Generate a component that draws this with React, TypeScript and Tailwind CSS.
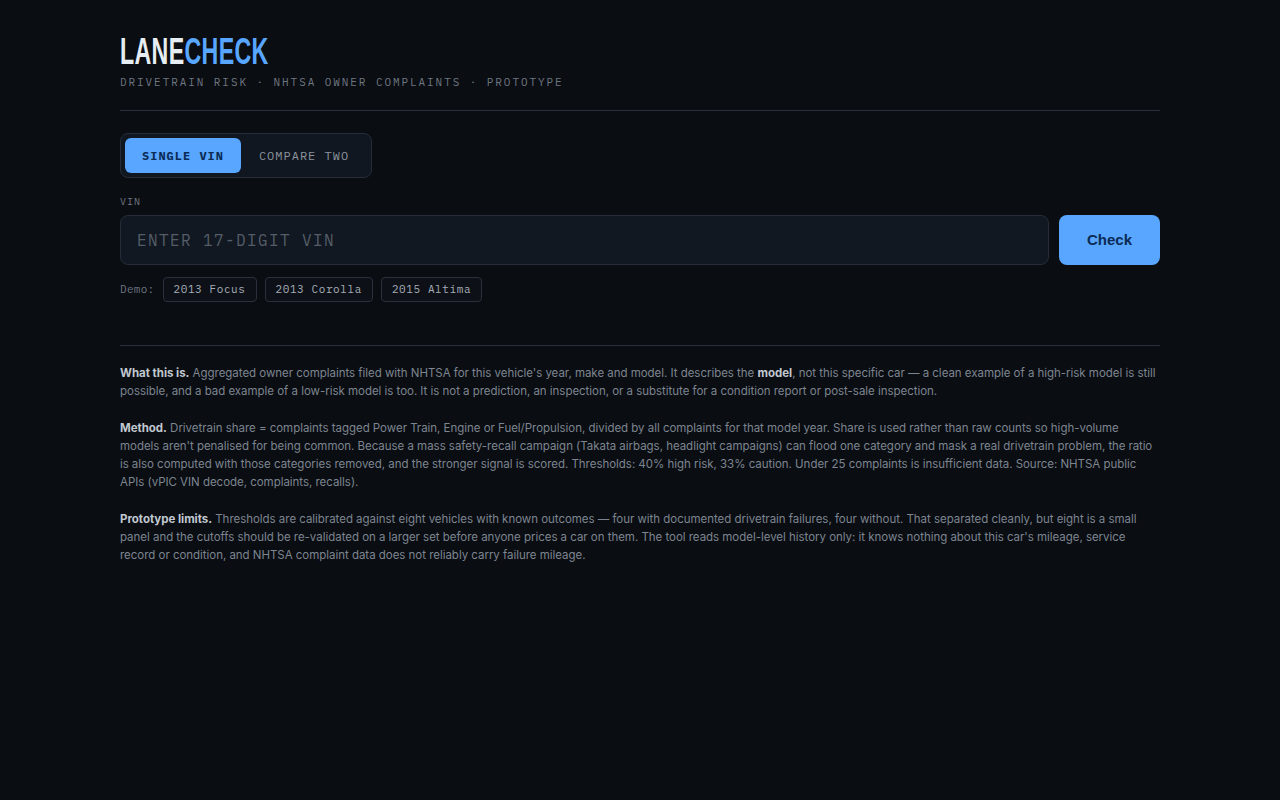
import { useState } from "react";

const mono = "font-['IBM_Plex_Mono','DejaVu_Sans_Mono','Liberation_Mono',monospace]";

const demos = ["2013 Focus", "2013 Corolla", "2015 Altima"];

export default function App() {
  const [mode, setMode] = useState<"single" | "compare">("single");
  const [vin, setVin] = useState("");

  return (
    <main className="min-h-screen bg-[#0a0d12] text-[#c9d1d9] font-['Inter','Noto_Sans',sans-serif]">
      <div className="mx-auto w-[1040px] pt-[33px]">
        <header className="border-b border-[#2a303a] pb-[21px]">
          <h1 className="h-[38px] font-['Liberation_Sans',sans-serif] text-[36px] font-bold leading-[38px]">
            <span className="inline-block origin-left scale-x-[0.645] whitespace-nowrap tracking-[0.5px]">
              <span className="text-[#e6edf3]">LANE</span>
              <span className="text-[#58a6ff]">CHECK</span>
            </span>
          </h1>
          <p className={`${mono} mt-[4px] text-[11px] leading-[14px] tracking-[1.93px] text-[#6e7681]`}>
            DRIVETRAIN RISK · NHTSA OWNER COMPLAINTS · PROTOTYPE
          </p>
        </header>

        <section className="border-b border-[#2a303a] pb-[43px] pt-[22px]">
          <div className="inline-flex rounded-lg border border-[#262d38] bg-[#111720] p-[4px]">
            <button
              onClick={() => setMode("single")}
              className={`${mono} h-[35px] w-[116px] rounded-md text-[12px] tracking-[1px] ${
                mode === "single"
                  ? "bg-[#58a6ff] font-bold text-[#0b2a55]"
                  : "text-[#8b949e]"
              }`}
            >
              SINGLE VIN
            </button>
            <button
              onClick={() => setMode("compare")}
              className={`${mono} h-[35px] w-[126px] rounded-md text-[12px] tracking-[1px] ${
                mode === "compare"
                  ? "bg-[#58a6ff] font-bold text-[#0b2a55]"
                  : "text-[#8b949e]"
              }`}
            >
              COMPARE TWO
            </button>
          </div>

          <label className={`${mono} mt-[18px] block text-[10px] leading-[12px] tracking-[1px] text-[#6e7681]`}>
            VIN
          </label>
          <div className="mt-[7px] flex gap-[10px]">
            <input
              value={vin}
              onChange={(e) => setVin(e.target.value.toUpperCase())}
              placeholder="ENTER 17-DIGIT VIN"
              className={`${mono} h-[50px] flex-1 rounded-lg border border-[#262d38] bg-[#111821] px-[16px] text-[16px] tracking-[1.4px] text-[#e6edf3] outline-none placeholder:text-[#545d68]`}
            />
            <button className="h-[50px] w-[101px] rounded-lg bg-[#58a6ff] font-['Liberation_Sans',sans-serif] text-[15px] font-bold text-[#0b2a55]">
              Check
            </button>
          </div>

          <div className="mt-[12px] flex items-center gap-[8px]">
            <span className={`${mono} text-[11px] tracking-[0.3px] text-[#6e7681]`}>Demo:</span>
            {demos.map((d) => (
              <button
                key={d}
                className={`${mono} h-[25px] rounded border border-[#2a313c] bg-[#0d1117] px-[10px] text-[11px] tracking-[0.6px] text-[#a5adb8]`}
              >
                {d}
              </button>
            ))}
          </div>
        </section>

        <section className="space-y-[18px] pt-[18px] text-[11.5px] leading-[18.3px] tracking-[-0.03px] text-[#7d8590]">
          <p>
            <strong className="font-bold text-[#c1c8d0]">What this is.</strong> Aggregated owner
            complaints filed with NHTSA for this vehicle's year, make and model. It describes the{" "}
            <strong className="font-bold text-[#c1c8d0]">model</strong>, not this specific car — a
            clean example of a high-risk model is still possible, and a bad example of a low-risk
            model is too. It is not a prediction, an inspection, or a substitute for a condition
            report or post-sale inspection.
          </p>
          <p>
            <strong className="font-bold text-[#c1c8d0]">Method.</strong> Drivetrain share =
            complaints tagged Power Train, Engine or Fuel/Propulsion, divided by all complaints for
            that model year. Share is used rather than raw counts so high-volume models aren't
            penalised for being common. Because a mass safety-recall campaign (Takata airbags,
            headlight campaigns) can flood one category and mask a real drivetrain problem,{" "}
            <span className="tracking-[-0.12px]">the ratio is</span> also computed with those
            categories removed, and the stronger signal is scored. Thresholds: 40% high risk, 33%
            caution. Under 25 complaints is insufficient data. Source: NHTSA public APIs (vPIC VIN
            decode, complaints, recalls).
          </p>
          <p>
            <strong className="font-bold text-[#c1c8d0]">Prototype limits.</strong> Thresholds are
            calibrated against eight vehicles with known outcomes — four with documented
            drivetrain failures, four without. That separated cleanly, but eight is a small panel
            and the cutoffs should be re-validated on a larger set before anyone prices a car on
            them. The tool reads model-level history only: it knows nothing about this car's
            mileage, service record or condition, and NHTSA complaint data does not reliably carry
            failure mileage.
          </p>
        </section>
      </div>
    </main>
  );
}
